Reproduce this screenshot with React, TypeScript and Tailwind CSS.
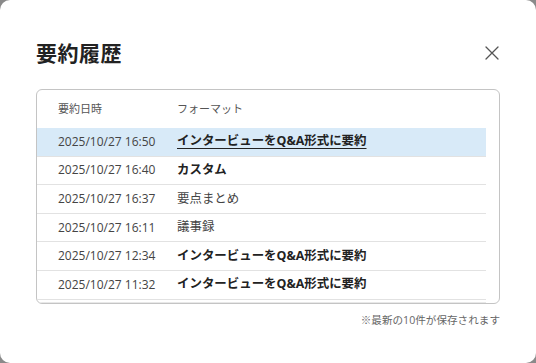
import React from "react";

const rows = [
  { date: "2025/10/27 16:50", fmt: "インタービューをQ&A形式に要約", bold: true, active: true },
  { date: "2025/10/27 16:40", fmt: "カスタム", bold: true, active: false },
  { date: "2025/10/27 16:37", fmt: "要点まとめ", bold: false, active: false },
  { date: "2025/10/27 16:11", fmt: "議事録", bold: false, active: false },
  { date: "2025/10/27 12:34", fmt: "インタービューをQ&A形式に要約", bold: true, active: false },
  { date: "2025/10/27 11:32", fmt: "インタービューをQ&A形式に要約", bold: true, active: false },
];

const font = { fontFamily: '"Open Sans", "Noto Sans CJK JP", sans-serif' };

export default function App() {
  return (
    <div className="w-[536px] h-[363px] bg-[#8a8a8a] overflow-hidden" style={font}>
      <div className="w-[536px] h-[363px] bg-white rounded-[10px] px-[36px] flex flex-col">
        <div className="flex items-center justify-between h-[36px] mt-[35px]">
          <h1 className="text-[21px] font-bold text-[#222] leading-none tracking-[0.5px]">要約履歴</h1>
          <svg width="14" height="14" viewBox="0 0 14 14" className="mr-[1px]">
            <path d="M1 1L13 13M13 1L1 13" stroke="#555" strokeWidth="1.3" strokeLinecap="round" />
          </svg>
        </div>
        <div className="mt-[18px] border border-[#c4c4c4] rounded-[6px] h-[215px] overflow-hidden pr-[13px]">
          <div className="flex items-center h-[38px] text-[11px] text-[#555]">
            <div className="w-[140px] pl-[21px]">要約日時</div>
            <div>フォーマット</div>
          </div>
          {rows.map((r, i) => (
            <div
              key={i}
              className={`flex items-center h-[28.6px] border-b border-[#e2e2e2] ${r.active ? "bg-[#d8eaf8]" : ""}`}
            >
              <div className="w-[140px] pl-[21px] text-[12px] text-[#444]">{r.date}</div>
              <div
                className={`text-[12.45px] ${r.bold ? "font-bold text-[#222]" : "text-[#444]"} ${r.active ? "underline underline-offset-[3px]" : ""}`}
              >
                {r.fmt}
              </div>
            </div>
          ))}
          <div className="h-[3px] border-b border-[#e8e8e8]" />
        </div>
        <div className="text-right text-[10.6px] text-[#666] mt-[9px]">※最新の10件が保存されます</div>
      </div>
    </div>
  );
}
